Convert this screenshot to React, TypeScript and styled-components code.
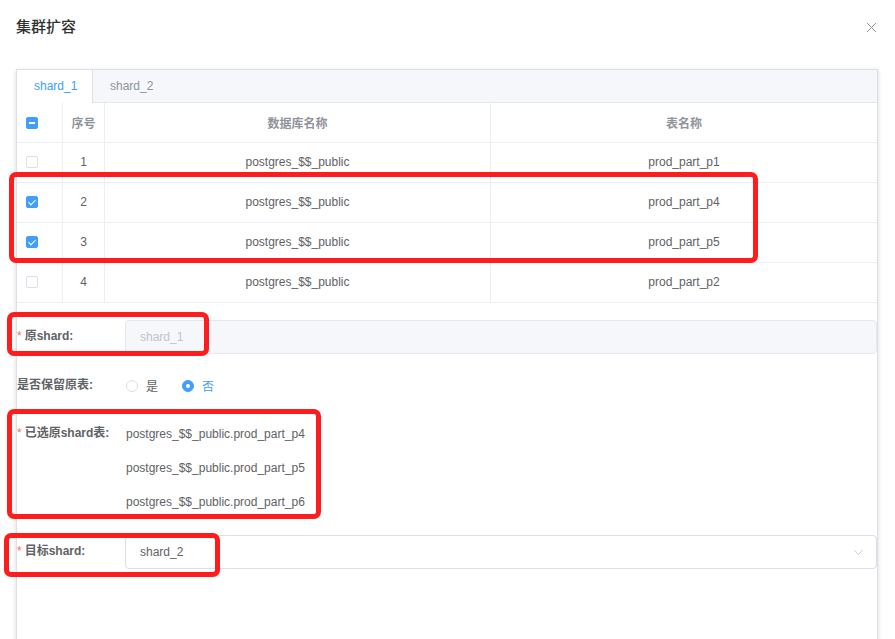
import React from "react";
import styled, { createGlobalStyle, css } from "styled-components";
import { X, ChevronDown } from "lucide-react";

const Global = createGlobalStyle`
  html, body { margin: 0; padding: 0; background: #fff; overflow: hidden; }
  body { font-family: "Liberation Sans", "Noto Sans CJK SC", sans-serif; }
  * { box-sizing: border-box; }
`;

const Page = styled.div`
  position: relative;
  width: 895px;
  height: 639px;
  overflow: hidden;
  background: #fff;
`;

const Header = styled.div`
  display: flex;
  align-items: center;
  justify-content: space-between;
  height: 24px;
  margin: 15px 16px 30px 16px;
`;

const Title = styled.div`
  font-size: 15px;
  line-height: 24px;
  color: #303133;
  font-weight: 500;
`;

const Close = styled.div`
  display: flex;
  align-items: center;
  color: #909399;
  margin-right: -1px;
`;

const Card = styled.div`
  margin: 0 17px 0 16px;
  border: 1px solid #dcdfe6;
  box-shadow: 0 2px 4px rgba(0, 0, 0, 0.12), 0 0 6px rgba(0, 0, 0, 0.04);
  padding-bottom: 110px;
`;

const TabBar = styled.div`
  display: flex;
  height: 33px;
  background: #f5f7fa;
  border-bottom: 1px solid #e4e7ed;
`;

const Tab = styled.div<{ $active?: boolean }>`
  height: 33px;
  padding: 0 17px;
  line-height: 33px;
  font-size: 12px;
  color: #909399;
  ${(p) =>
    p.$active &&
    css`
      background: #fff;
      color: #409eff;
      border-right: 1px solid #dcdfe6;
      width: 76px;
    `}
`;

const Table = styled.div`
  display: grid;
  grid-template-columns: 46px 42px 386px 386px;
`;

const Cell = styled.div<{ $head?: boolean; $left?: boolean; $last?: boolean }>`
  height: 40px;
  display: flex;
  align-items: center;
  justify-content: ${(p) => (p.$left ? "flex-start" : "center")};
  padding-left: ${(p) => (p.$left ? "9px" : "0")};
  padding-bottom: ${(p) => (p.$head ? "0" : "2px")};
  border-bottom: 1px solid #ebeef5;
  border-right: ${(p) => (p.$last ? "none" : "1px solid #ebeef5")};
  font-size: 12px;
  color: ${(p) => (p.$head ? "#909399" : "#606266")};
  font-weight: ${(p) => (p.$head ? "bold" : "normal")};
`;

const Check = styled.span<{ $state: "on" | "off" | "half" }>`
  position: relative;
  display: inline-block;
  width: 12px;
  height: 12px;
  border-radius: 2px;
  border: 1px solid ${(p) => (p.$state === "off" ? "#dcdfe6" : "#409eff")};
  background: ${(p) => (p.$state === "off" ? "#fff" : "#409eff")};
  ${(p) =>
    p.$state === "on" &&
    css`
      &::after {
        content: "";
        position: absolute;
        left: 3px;
        top: 1px;
        width: 3px;
        height: 6px;
        border: 1px solid #fff;
        border-left: 0;
        border-top: 0;
        transform: rotate(45deg);
      }
    `}
  ${(p) =>
    p.$state === "half" &&
    css`
      &::after {
        content: "";
        position: absolute;
        left: 2px;
        top: 4px;
        width: 6px;
        height: 2px;
        background: #fff;
      }
    `}
`;

const Form = styled.div`
  margin-top: 17px;
  display: flex;
  flex-direction: column;
  gap: 15px;
`;

const Item = styled.div<{ $extra?: number }>`
  display: flex;
  align-items: flex-start;
  margin-top: ${(p) => p.$extra ?? 0}px;
`;

const Label = styled.div<{ $required?: boolean }>`
  width: 108px;
  flex: none;
  line-height: 33px;
  font-size: 12px;
  font-weight: bold;
  color: #606266;
  &::before {
    content: "*";
    color: #f56c6c;
    margin-right: 3px;
    font-weight: normal;
    display: ${(p) => (p.$required ? "inline" : "none")};
  }
`;

const Input = styled.div<{ $disabled?: boolean }>`
  flex: 1;
  height: 34px;
  display: flex;
  align-items: center;
  justify-content: space-between;
  padding: 0 10px 0 14px;
  border: 1px solid ${(p) => (p.$disabled ? "#e4e7ed" : "#dcdfe6")};
  border-radius: 4px;
  background: ${(p) => (p.$disabled ? "#f5f7fa" : "#fff")};
  color: ${(p) => (p.$disabled ? "#c0c4cc" : "#606266")};
  font-size: 12px;
`;

const Radios = styled.div`
  display: flex;
  align-items: center;
  height: 33px;
  padding-left: 1px;
  gap: 24px;
`;

const RadioOpt = styled.label<{ $on?: boolean }>`
  display: flex;
  align-items: center;
  gap: 8px;
  font-size: 12px;
  color: ${(p) => (p.$on ? "#409eff" : "#606266")};
`;

const Dot = styled.span<{ $on?: boolean }>`
  position: relative;
  width: 12px;
  height: 12px;
  border-radius: 50%;
  border: 1px solid ${(p) => (p.$on ? "#409eff" : "#dcdfe6")};
  background: ${(p) => (p.$on ? "#409eff" : "#fff")};
  ${(p) =>
    p.$on &&
    css`
      &::after {
        content: "";
        position: absolute;
        left: 3px;
        top: 3px;
        width: 4px;
        height: 4px;
        border-radius: 50%;
        background: #fff;
      }
    `}
`;

const ValueList = styled.div`
  display: flex;
  flex-direction: column;
  padding-left: 1px;
`;

const Value = styled.div`
  line-height: 34px;
  font-size: 12px;
  color: #606266;
`;

const Mark = styled.div`
  position: absolute;
  border: 5px solid #ff1c1c;
  border-radius: 7px;
  pointer-events: none;
`;

const rows = [
  { n: 1, t: "prod_part_p1", on: false },
  { n: 2, t: "prod_part_p4", on: true },
  { n: 3, t: "prod_part_p5", on: true },
  { n: 4, t: "prod_part_p2", on: false },
];

const marks = [
  { x: 9, y: 172, w: 749, h: 91 },
  { x: 7, y: 312, w: 202, h: 44 },
  { x: 7, y: 409, w: 314, h: 110 },
  { x: 4, y: 533, w: 216, h: 44 },
];

export default function App() {
  return (
    <Page>
      <Global />
      <Header>
        <Title>集群扩容</Title>
        <Close>
          <X size={17} strokeWidth={1.4} />
        </Close>
      </Header>
      <Card>
        <TabBar>
          <Tab $active>shard_1</Tab>
          <Tab>shard_2</Tab>
        </TabBar>
        <Table>
          <Cell $head $left>
            <Check $state="half" />
          </Cell>
          <Cell $head>序号</Cell>
          <Cell $head>数据库名称</Cell>
          <Cell $head $last>表名称</Cell>
          {rows.map((r) => (
            <React.Fragment key={r.n}>
              <Cell $left>
                <Check $state={r.on ? "on" : "off"} />
              </Cell>
              <Cell>{r.n}</Cell>
              <Cell>postgres_$$_public</Cell>
              <Cell $last>{r.t}</Cell>
            </React.Fragment>
          ))}
        </Table>
        <Form>
          <Item>
            <Label $required>原shard:</Label>
            <Input $disabled>shard_1</Input>
          </Item>
          <Item>
            <Label>是否保留原表:</Label>
            <Radios>
              <RadioOpt>
                <Dot />是
              </RadioOpt>
              <RadioOpt $on>
                <Dot $on />否
              </RadioOpt>
            </Radios>
          </Item>
          <Item>
            <Label $required>已选原shard表:</Label>
            <ValueList>
              <Value>postgres_$$_public.prod_part_p4</Value>
              <Value>postgres_$$_public.prod_part_p5</Value>
              <Value>postgres_$$_public.prod_part_p6</Value>
            </ValueList>
          </Item>
          <Item $extra={1}>
            <Label $required>目标shard:</Label>
            <Input>
              shard_2
              <ChevronDown size={15} color="#c0c4cc" strokeWidth={1.5} />
            </Input>
          </Item>
        </Form>
      </Card>
      {marks.map((m, i) => (
        <Mark key={i} style={{ left: m.x, top: m.y, width: m.w, height: m.h }} />
      ))}
    </Page>
  );
}
